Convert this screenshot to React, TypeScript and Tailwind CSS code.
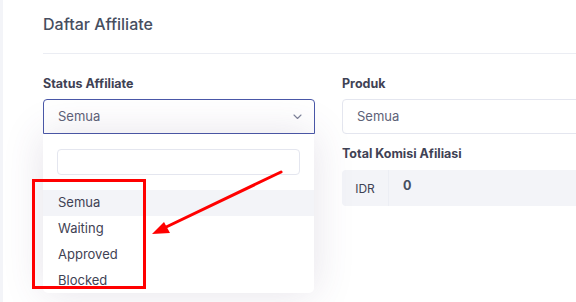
import React from 'react';

const options = ['Semua', 'Waiting', 'Approved', 'Blocked'];

const ChevronDown: React.FC = () => (
  <svg width="9" height="6" viewBox="0 0 9 6" fill="none">
    <path d="M1 1l3.5 3.5L8 1" stroke="#7e8299" strokeWidth="1.1" strokeLinecap="round" strokeLinejoin="round" />
  </svg>
);

const App: React.FC = () => {
  return (
    <div
      className="relative flex w-[576px] h-[302px] overflow-hidden bg-[#f3f4f8] text-[#3f4254]"
      style={{ fontFamily: 'Inter, "Noto Sans", sans-serif' }}
    >
      <div className="w-[3px] shrink-0" />
      <div className="flex-1 bg-white pl-[40px]">
        <div className="h-[54px] border-b border-[#ebedf3] pt-[12px]">
          <h2 className="text-[16px] leading-[24px] font-medium text-[#464e5f]">Daftar Affiliate</h2>
        </div>

        <div className="flex gap-[27px] pt-[20px]">
          {/* left column */}
          <div className="relative w-[272px] shrink-0">
            <label className="block text-[12.5px] leading-[20px] font-bold text-[#3f4254]">Status Affiliate</label>
            <div className="mt-[5px] flex h-[35px] items-center justify-between rounded-t-[4px] border border-[#4a58a8] pl-[14px] pr-[12px]">
              <span className="text-[13px] text-[#5e6278]">Semua</span>
              <ChevronDown />
            </div>

            <div className="absolute left-0 top-[60px] z-10 w-[271px] h-[159px] rounded-b-[5px] bg-white pt-[15px] shadow-[0_0_40px_0_rgba(82,63,105,0.15)]">
              <div className="mx-[14px] h-[26px] rounded-[4px] border border-[#e4e6ef]" />
              <ul className="mt-[15px]">
                {options.map((o, i) => (
                  <li
                    key={o}
                    className={`flex h-[26px] items-center px-[15px] text-[13px] text-[#3f4254] ${i === 0 ? 'bg-[#f3f4f8]' : ''}`}
                  >
                    {o}
                  </li>
                ))}
              </ul>
            </div>
          </div>

          {/* right column */}
          <div className="w-[272px] shrink-0">
            <label className="block text-[12.5px] leading-[20px] font-bold text-[#3f4254]">Produk</label>
            <div className="mt-[5px] flex h-[35px] items-center rounded-[4px] border border-[#e4e6ef] pl-[14px]">
              <span className="text-[13px] text-[#5e6278]">Semua</span>
            </div>

            <label className="mt-[10px] block text-[12.5px] leading-[20px] font-bold text-[#3f4254]">Total Komisi Afiliasi</label>
            <div className="mt-[6px] flex h-[36px] rounded-[4px] bg-[#f3f4f8]">
              <div className="flex w-[47px] items-center justify-center border-r border-[#eceef4] text-[12px] pt-[2px] text-[#3f4254]">IDR</div>
              <div className="flex items-center pl-[14px] pb-[4px] text-[12.5px] font-bold text-[#464e5f]">0</div>
            </div>
          </div>
        </div>
      </div>

      {/* annotation overlay */}
      <div className="pointer-events-none absolute left-[32px] top-[179px] z-20 h-[110px] w-[114px] border-[3px] border-[#ff0000]" />
      <svg className="pointer-events-none absolute left-0 top-0 z-20" width="576" height="302">
        <line x1="281" y1="172" x2="162" y2="229" stroke="#ff0000" strokeWidth="3" strokeLinecap="round" />
        <polygon points="152,234 164,222 170,233" fill="#ff0000" />
      </svg>
    </div>
  );
};

export default App;
